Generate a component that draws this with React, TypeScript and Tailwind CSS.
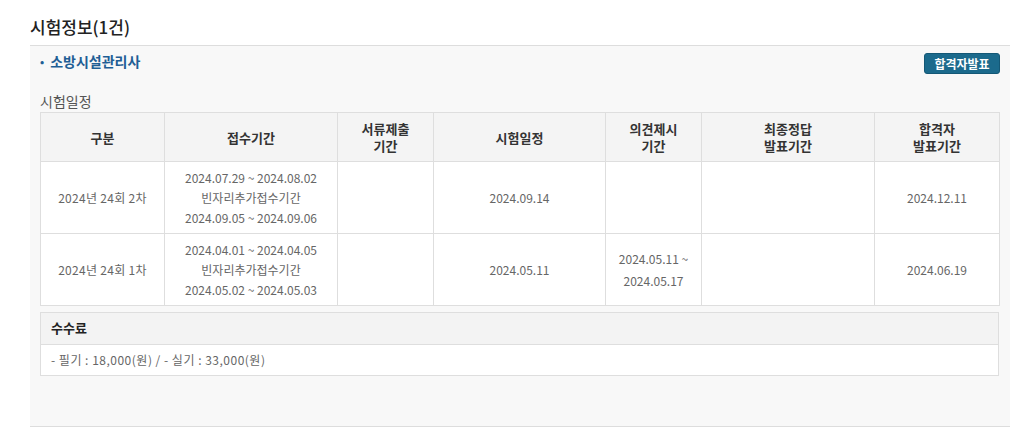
const rows = [
  {
    name: '2024년 24회 2차',
    receipt: ['2024.07.29 ~ 2024.08.02', '빈자리추가접수기간', '2024.09.05 ~ 2024.09.06'],
    docs: [] as string[],
    exam: ['2024.09.14'],
    opinion: [] as string[],
    answer: [] as string[],
    pass: ['2024.12.11'],
  },
  {
    name: '2024년 24회 1차',
    receipt: ['2024.04.01 ~ 2024.04.05', '빈자리추가접수기간', '2024.05.02 ~ 2024.05.03'],
    docs: [] as string[],
    exam: ['2024.05.11'],
    opinion: ['2024.05.11 ~', '2024.05.17'],
    answer: [] as string[],
    pass: ['2024.06.19'],
  },
];

const headers = [
  { w: 'w-[124px]', lines: ['구분'] },
  { w: 'w-[173px]', lines: ['접수기간'] },
  { w: 'w-[96px]', lines: ['서류제출', '기간'] },
  { w: 'w-[172px]', lines: ['시험일정'] },
  { w: 'w-[96px]', lines: ['의견제시', '기간'] },
  { w: 'w-[173px]', lines: ['최종정답', '발표기간'] },
  { w: 'w-[125px]', lines: ['합격자', '발표기간'] },
];

function Lines({ lines }: { lines: string[] }) {
  return (
    <>
      {lines.map((l, i) => (
        <div key={i}>{l}</div>
      ))}
    </>
  );
}

export default function App() {
  return (
    <div className="w-[1021px] h-[441px] bg-white text-[#333]" style={{ fontFamily: '"Noto Sans CJK KR", "Liberation Sans", sans-serif' }}>
      <div className="pl-[30px]">
        {/* title */}
        <h2 className="pt-[17px] pb-[8px] text-[17px] leading-[20px] font-medium text-[#222]">시험정보(1건)</h2>

        <div className="w-[980px] bg-[#f8f8f8] border-t border-b border-[#dddddd] pl-[10px] pr-[10px] pt-[7px] pb-[50px]">
          <div className="flex items-start justify-between h-[21px]">
            <div className="-mt-[2px] flex items-center gap-[6px] text-[14px] font-bold text-[#1f5e95] leading-[20px]">
              <span className="text-[11px]">•</span>
              <span>소방시설관리사</span>
            </div>
            <button className="h-[21px] w-[76px] rounded-[3px] bg-[#1b6a8c] border border-[#145876] text-white text-[12px] font-bold leading-[18px]">
              합격자발표
            </button>
          </div>

          <div className="mt-[17px] mb-[1px] text-[14px] leading-[20px] text-[#555]">시험일정</div>

          <table className="w-[959px] border-collapse table-fixed bg-white">
            <thead>
              <tr className="h-[49px] bg-[#f4f4f4]">
                {headers.map((h, i) => (
                  <th key={i} className={`${h.w} border border-[#dedede] text-[13px] leading-[17px] font-bold text-[#333] align-middle`}>
                    <Lines lines={h.lines} />
                  </th>
                ))}
              </tr>
            </thead>
            <tbody>
              {rows.map((r, i) => (
                <tr key={i} className="h-[72px] text-[12px] leading-[20px] text-[#666] text-center">
                  <td className="border border-[#dedede] tracking-[0.3px]">{r.name}</td>
                  <td className="border border-[#dedede]"><Lines lines={r.receipt} /></td>
                  <td className="border border-[#dedede]"><Lines lines={r.docs} /></td>
                  <td className="border border-[#dedede]"><Lines lines={r.exam} /></td>
                  <td className="border border-[#dedede] leading-[22px]"><Lines lines={r.opinion} /></td>
                  <td className="border border-[#dedede]"><Lines lines={r.answer} /></td>
                  <td className="border border-[#dedede]"><Lines lines={r.pass} /></td>
                </tr>
              ))}
            </tbody>
          </table>

          <div className="mt-[6px] w-[959px] border border-[#dedede] bg-white">
            <div className="h-[32px] flex items-center pl-[10px] pb-[2px] bg-[#f3f3f3] border-b border-[#dedede] text-[13px] font-bold text-[#222]">
              수수료
            </div>
            <div className="h-[30px] flex items-center pl-[10px] text-[12px] tracking-[0.5px] text-[#666]">
              - 필기 : 18,000(원) / - 실기 : 33,000(원)
            </div>
          </div>
        </div>
      </div>
    </div>
  );
}
